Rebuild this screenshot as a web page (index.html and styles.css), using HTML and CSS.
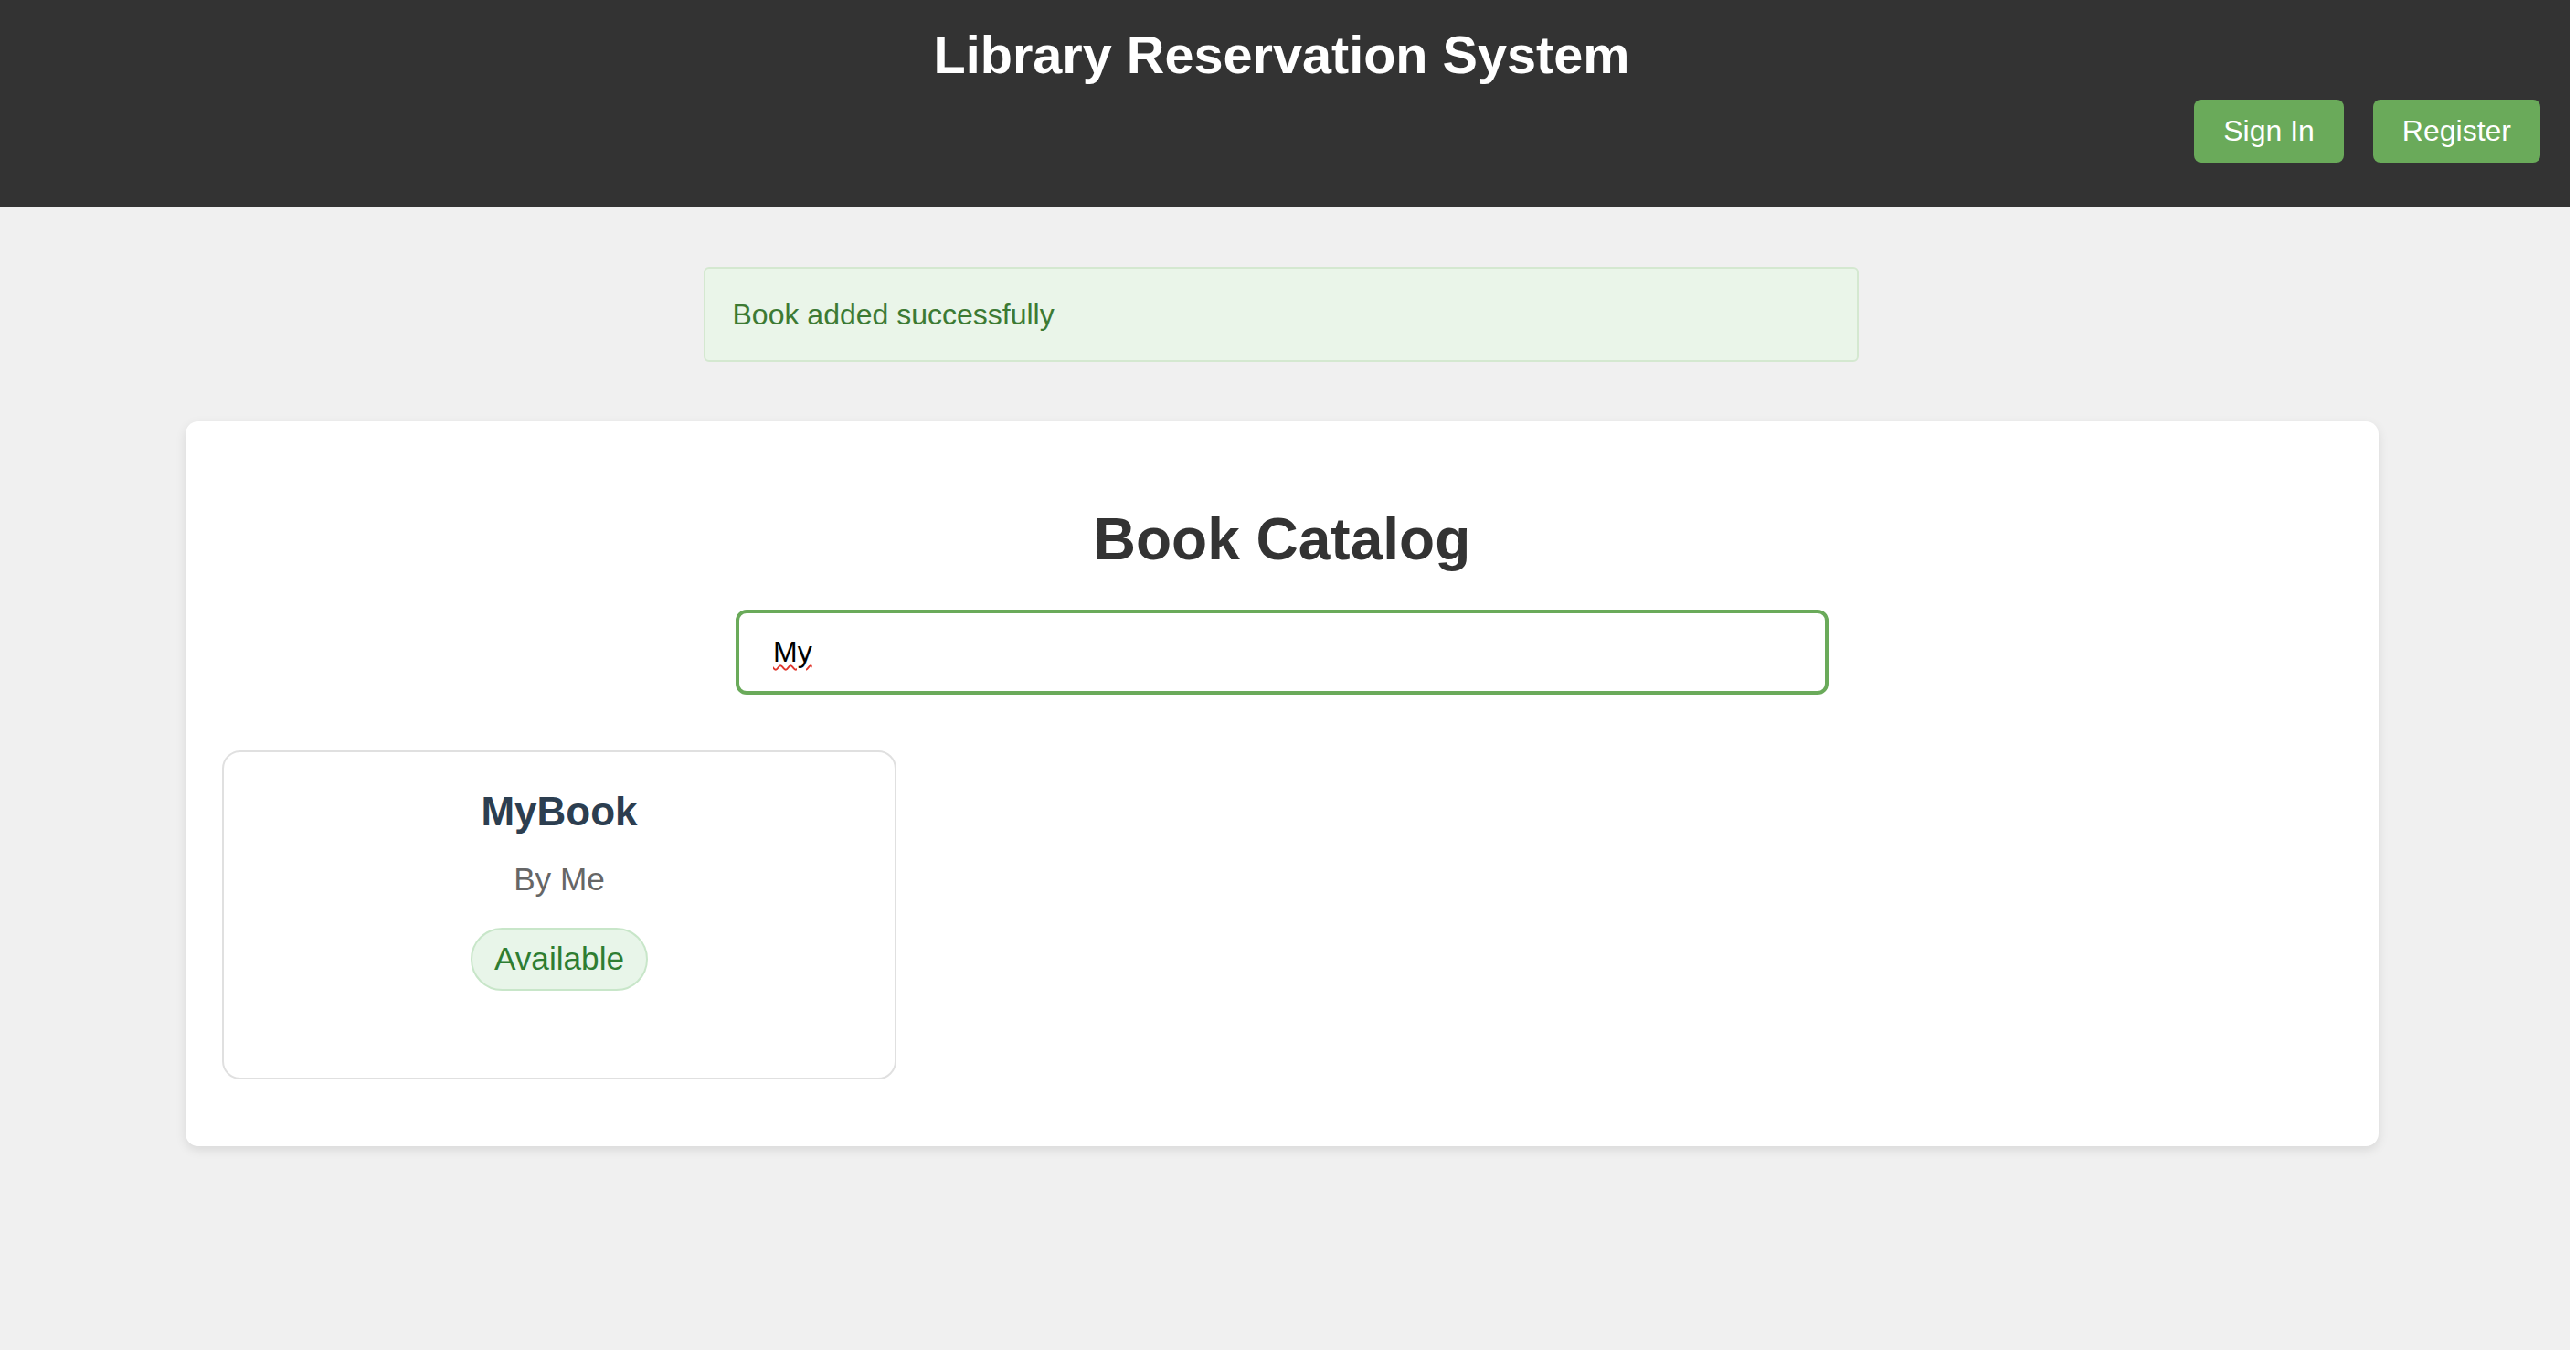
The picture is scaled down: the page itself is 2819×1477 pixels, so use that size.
FILE: index.html
```html
<!DOCTYPE html>
<html lang="en">
<head>
<meta charset="utf-8">
<title>Library Reservation System</title>
<link rel="stylesheet" href="styles.css">
</head>
<body>
<header class="site-header">
  <h1 class="site-title">Library Reservation System</h1>
  <nav class="auth-nav">
    <button class="btn">Sign In</button>
    <button class="btn">Register</button>
  </nav>
</header>
<main class="main">
  <div class="alert">Book added successfully</div>
  <section class="catalog">
    <h2 class="catalog-title">Book Catalog</h2>
    <div class="search-wrap">
      <input class="search" type="text" value="My" spellcheck="false">
      <span class="spell-mark" aria-hidden="true">My</span>
    </div>
    <div class="book-grid">
      <article class="book-card">
        <h3 class="book-title">MyBook</h3>
        <p class="book-author">By Me</p>
        <span class="badge">Available</span>
      </article>
    </div>
  </section>
</main>
</body>
</html>
```

FILE: styles.css
```css
html {
  background: #ffffff;
}
body {
  margin: 0;
  width: 2812px;
  min-height: 1477px;
  background: #f0f0f0;
  font-family: "Liberation Sans", Arial, sans-serif;
  font-size: 32px;
  color: #333;
}
.site-header {
  background: #333333;
  padding: 27px 32px 48px;
  display: flex;
  flex-direction: column;
}
.site-title {
  margin: 0 7px 0 0;
  color: #fff;
  font-size: 57.6px;
  font-weight: bold;
  text-align: center;
  line-height: normal;
}
.auth-nav {
  margin-top: 16px;
  display: flex;
  justify-content: flex-end;
  gap: 32px;
}
.btn {
  font-family: inherit;
  font-size: 32px;
  line-height: normal;
  color: #fff;
  background: #6aaa5a;
  border: none;
  border-radius: 8px;
  padding: 16px 32px;
}
.main {
  padding-top: 66px;
  display: flex;
  flex-direction: column;
  align-items: center;
}
.alert {
  box-sizing: border-box;
  width: 1264px;
  padding: 30px;
  line-height: 40px;
  background: #eaf5e9;
  border: 2px solid #d4e8d0;
  border-radius: 6px;
  color: #3c7a33;
  margin-bottom: 65px;
  margin-right: 9px;
}
.catalog {
  box-sizing: border-box;
  width: 2400px;
  margin-right: 6px;
  background: #fff;
  border-radius: 14px;
  box-shadow: 0 4px 12px rgba(0, 0, 0, 0.1);
  padding: 40px 40px 73px;
  display: flex;
  flex-direction: column;
}
.catalog-title {
  margin: 52px 0 40px;
  font-size: 64px;
  font-weight: bold;
  text-align: center;
  color: #333;
  line-height: normal;
}
.search-wrap {
  position: relative;
  align-self: center;
  width: 1196px;
  height: 93px;
}
.search {
  box-sizing: border-box;
  display: block;
  width: 100%;
  height: 93px;
  padding: 0 37px;
  border: 4px solid #6aaa5a;
  border-radius: 12px;
  font-family: inherit;
  font-size: 32px;
  color: #000;
  outline: none;
}
.spell-mark {
  position: absolute;
  left: 41px;
  top: 0;
  height: 93px;
  line-height: 93px;
  font-size: 32px;
  color: transparent;
  pointer-events: none;
  text-decoration-line: underline;
  text-decoration-style: wavy;
  text-decoration-color: #e0352b;
  text-decoration-thickness: 2px;
  text-underline-offset: 3px;
}
.book-grid {
  margin-top: 61px;
  display: grid;
  grid-template-columns: repeat(3, 1fr);
  gap: 53px;
}
.book-card {
  border: 2px solid #e0e0e0;
  border-radius: 20px;
  padding: 40px 20px 95px;
  text-align: center;
}
.book-title {
  margin: 0;
  font-size: 44px;
  line-height: 50.6px;
  font-weight: bold;
  color: #2c3e50;
}
.book-author {
  margin: 28px 0 33px;
  font-size: 35.2px;
  line-height: 40.5px;
  color: #666;
}
.badge {
  display: inline-block;
  padding: 12px 24px;
  font-size: 35.2px;
  line-height: 40.5px;
  color: #2e7d32;
  background: #e8f5e9;
  border: 2px solid #c8e6c9;
  border-radius: 999px;
}
```
